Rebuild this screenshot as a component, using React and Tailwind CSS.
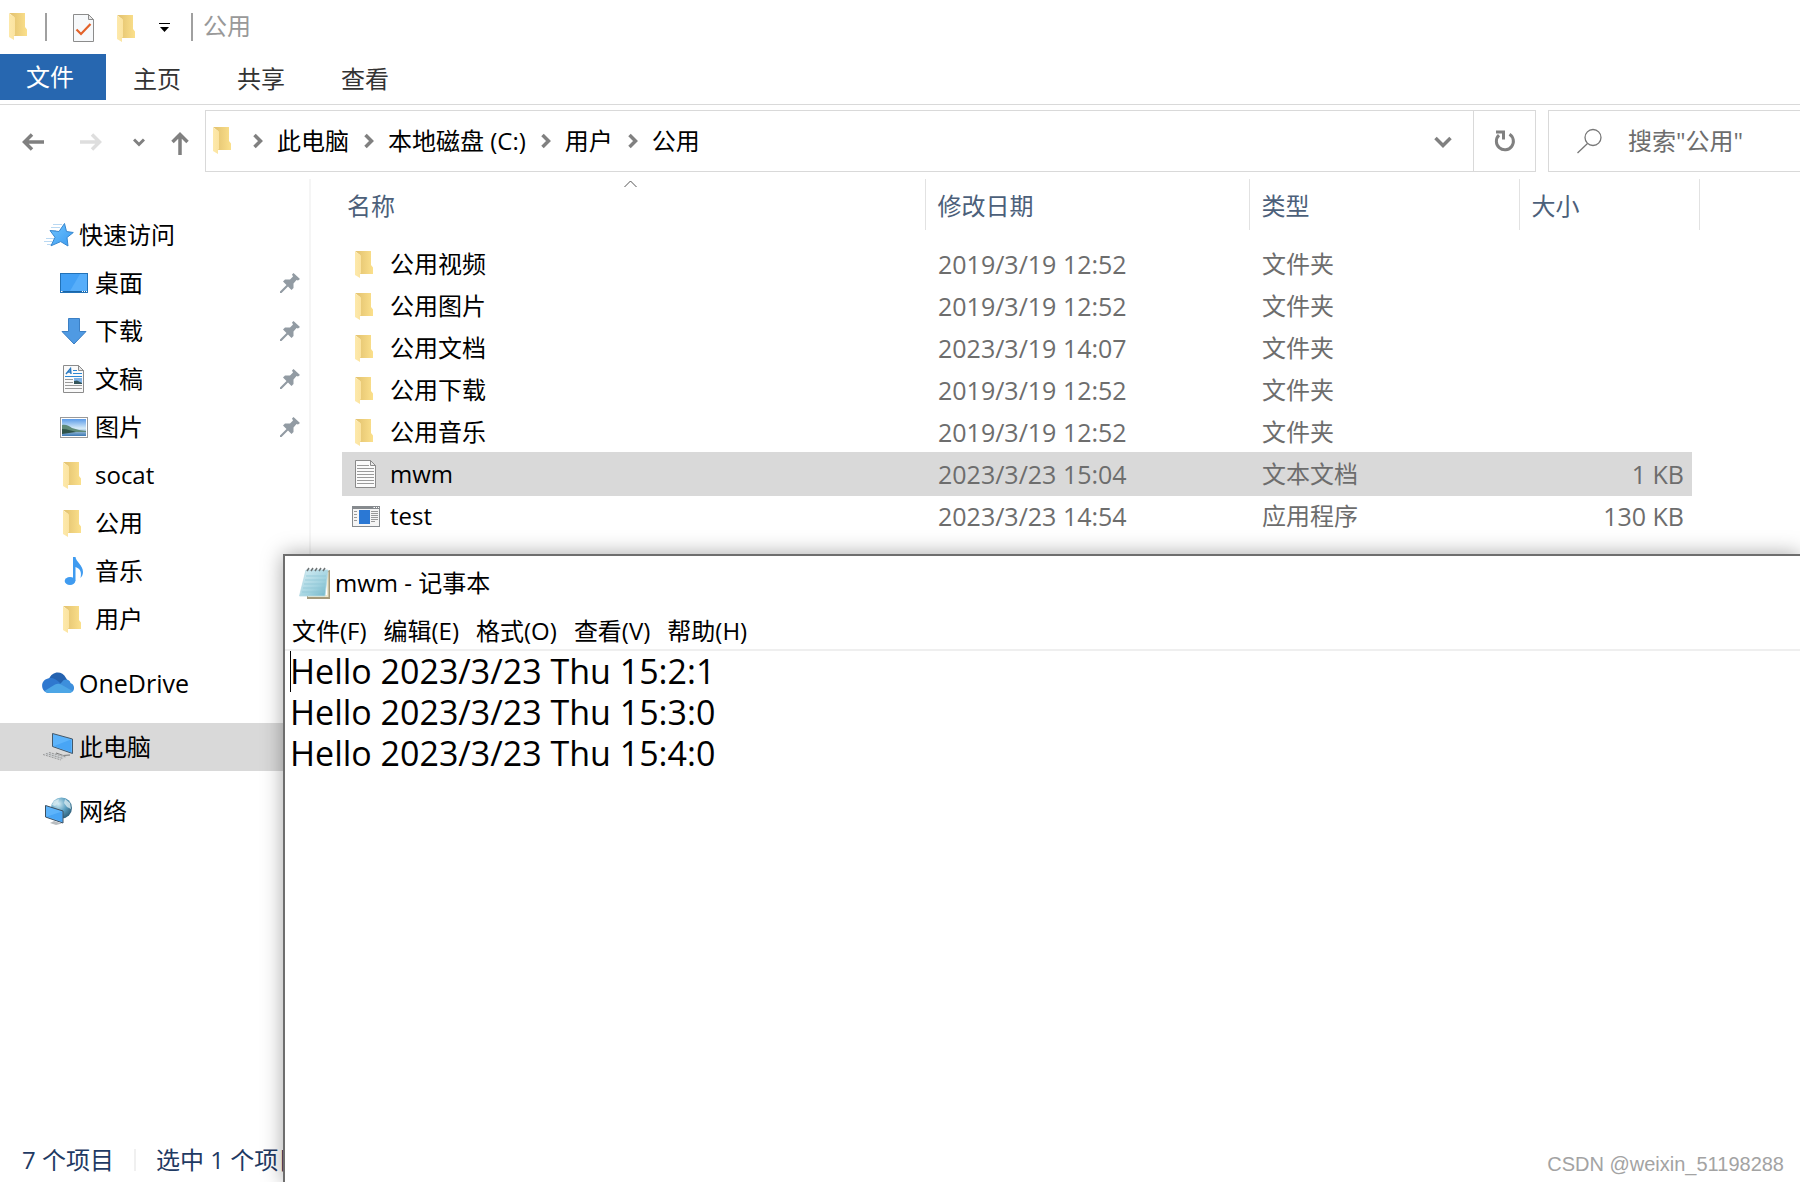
/**
 * File Explorer with a Notepad window on top
 */

import { useState } from 'react';

const files = [
  { name: '公用视频', date: '2019/3/19 12:52', type: '文件夹', size: '', icon: 'folder' },
  { name: '公用图片', date: '2019/3/19 12:52', type: '文件夹', size: '', icon: 'folder' },
  { name: '公用文档', date: '2023/3/19 14:07', type: '文件夹', size: '', icon: 'folder' },
  { name: '公用下载', date: '2019/3/19 12:52', type: '文件夹', size: '', icon: 'folder' },
  { name: '公用音乐', date: '2019/3/19 12:52', type: '文件夹', size: '', icon: 'folder' },
  { name: 'mwm', date: '2023/3/23 15:04', type: '文本文档', size: '1 KB', icon: 'text' },
  { name: 'test', date: '2023/3/23 14:54', type: '应用程序', size: '130 KB', icon: 'app' },
];

const quickAccess = [
  { name: '桌面', icon: 'desktop', pinned: true },
  { name: '下载', icon: 'download', pinned: true },
  { name: '文稿', icon: 'document', pinned: true },
  { name: '图片', icon: 'picture', pinned: true },
  { name: 'socat', icon: 'folder' },
  { name: '公用', icon: 'folder' },
  { name: '音乐', icon: 'music' },
  { name: '用户', icon: 'folder' },
];

const crumbs = ['此电脑', '本地磁盘 (C:)', '用户', '公用'];
const menus = ['文件(F)', '编辑(E)', '格式(O)', '查看(V)', '帮助(H)'];
const noteText = 'Hello 2023/3/23 Thu 15:2:1\nHello 2023/3/23 Thu 15:3:0\nHello 2023/3/23 Thu 15:4:0';

const FolderIcon = () => (
  <svg width="19" height="28" viewBox="0 0 19 28">
    <defs>
      <linearGradient id="folderBack" x1="0" x2="1">
        <stop offset="0.2" stopColor="#e6c673" />
        <stop offset="1" stopColor="#fbe08c" />
      </linearGradient>
      <linearGradient id="folderFront" x1="0" x2="1">
        <stop offset="0" stopColor="#fde9ab" />
        <stop offset="1" stopColor="#fbe3a0" />
      </linearGradient>
    </defs>
    <path d="M0 0H16V14L18 16.500V23H5V4Z" fill="url(#folderBack)" />
    <path d="M0 0.500L6 4.500V22L5 23V27L0 24Z" fill="url(#folderFront)" />
  </svg>
);

const CheckDocIcon = () => (
  <svg width="21" height="28" viewBox="0 0 21 28">
    <path d="M0.500 0.500H15.500L20.500 5.500V27.500H0.500Z" fill="#f7f9fb" stroke="#8c8c8c" />
    <path d="M15.500 0.500V5.500H20.500Z" fill="#e8e8e8" stroke="#8c8c8c" />
    <path d="M3.500 15.500L8 20L17.500 10" fill="none" stroke="#e2622a" strokeWidth="2.200" />
  </svg>
);

const StarIcon = () => (
  <svg width="32" height="26" viewBox="0 0 32 26">
    <defs>
      <linearGradient id="star" x1="0" y1="0" x2="1" y2="1">
        <stop offset="0" stopColor="#6fc4ff" />
        <stop offset="1" stopColor="#3a9af0" />
      </linearGradient>
    </defs>
    <path d="M11 2.500H20M9 5.500H18M8 8.500H14M4 16.500H12M2 19.500H10M5 22.500H9" stroke="#b9d8f2" strokeWidth="1" />
    <path d="M22.500 1.500L24.500 9.500L31.300 10.500L25 15.500L26 24L18.700 19.600L9 23.800L13 15.300L8 8.500L17 9.500Z" fill="url(#star)" stroke="#3787cf" strokeWidth="1" />
  </svg>
);

const DesktopIcon = () => (
  <svg width="28" height="20" viewBox="0 0 28 20">
    <rect x="0.500" y="0.500" width="27" height="19" fill="#42a0f5" stroke="#2272b8" />
    <path d="M10 18L20 1H27V18Z" fill="#57aefa" />
    <path d="M1 18.500H27" stroke="#1a65a6" />
    <path d="M1 18.500H2.500M22 18.500H23M24 18.500H25M26 18.500H27" stroke="#fff" />
  </svg>
);

const DownloadIcon = () => (
  <svg width="28" height="27" viewBox="0 0 28 27">
    <path d="M8.500 0.500H19.500V13.500H26L14 26L2 13.500H8.500Z" fill="#4f9ae3" stroke="#3b7fc4" />
  </svg>
);

const DocumentIcon = () => (
  <svg width="28" height="28" viewBox="0 0 28 28">
    <path d="M3.500 0.500H18.500L23.500 5.500V27.500H3.500Z" fill="#fafafa" stroke="#8c8c8c" />
    <path d="M18.500 0.500V5.500H23.500Z" fill="#e8e8e8" stroke="#8c8c8c" />
    <path d="M6 9L10.500 3.500L11 9M8 7H11" fill="none" stroke="#2878c0" strokeWidth="1.400" />
    <path d="M13 5.500H17M13 8.500H22M5 11.500H22" stroke="#2b87d3" />
    <path d="M5 14.500H13M5 17.500H13M5 20.500H22M5 23.500H22" stroke="#9a9a9a" />
    <rect x="14" y="13" width="8" height="6" fill="#7fb2e5" />
    <path d="M14 16L17 15.500L22 18V19H14Z" fill="#34555a" />
  </svg>
);

const PictureIcon = () => (
  <svg width="28" height="21" viewBox="0 0 28 21">
    <defs>
      <linearGradient id="sky" x1="0" y1="0" x2="0" y2="1">
        <stop offset="0" stopColor="#5b9be8" />
        <stop offset="0.550" stopColor="#d6ebf8" />
        <stop offset="0.750" stopColor="#8fb4d2" />
        <stop offset="1" stopColor="#3b78b4" />
      </linearGradient>
    </defs>
    <rect x="0.500" y="0.500" width="27" height="20" fill="#fff" stroke="#999" />
    <rect x="2" y="2" width="24" height="17" fill="url(#sky)" />
    <path d="M2 8C6 7 9 9 12 11L19 13L26 14V15H2Z" fill="#5f8a78" />
    <path d="M2 12C8 12 12 14 16 15L2 17Z" fill="#2e5348" />
  </svg>
);

const MusicIcon = () => (
  <svg width="28" height="28" viewBox="0 0 28 28">
    <ellipse cx="10" cy="24" rx="5.300" ry="4" fill="#3f9bf0" />
    <path d="M13 0H15.500C16 5 23 8 23 15C23 17.500 22 19.500 20.500 21C22 15 20 11.500 15.500 10V24H13Z" fill="#3f9bf0" />
  </svg>
);

const OneDriveIcon = () => (
  <svg width="32" height="22" viewBox="0 0 32 22">
    <path d="M7 7C10 -1 20 -2 24 6L27 11L16 14L7 8Z" fill="#2462b0" />
    <path d="M7 21C-2 20 -2 8 6 6.500C10 5 14 7 17 10L20 13L7 21Z" fill="#2f78cf" />
    <path d="M20 10C22 6 28 7 28.500 11C34 13 33 21 27 21L15 15Z" fill="#3d8fdc" />
    <path d="M2.500 19L13 12.500C16 11 18 12 20 13L30.500 19C29 21 28 21 26 21H7C5 21 3.500 20 2.500 19Z" fill="#4da6e6" />
  </svg>
);

const ComputerIcon = () => (
  <svg width="32" height="28" viewBox="0 0 32 28">
    <path d="M10.500 0.500L30.500 6V20.500L10.500 13.500Z" fill="#5db4fb" stroke="#43586a" />
    <path d="M12 13L29 6.500V19L12 13.200Z" fill="#48a5f5" />
    <path d="M14 20L21 22.500L28 22" fill="none" stroke="#777" strokeWidth="1.200" />
    <path d="M1 21L7 19L25 23.500L19 27Z" fill="#cfd2d4" />
    <path d="M1 21.500L19 27M4 20.500L21 25.500M7 19.500L24 24" stroke="#999" strokeWidth="1" strokeDasharray="2 1" />
  </svg>
);

const NetworkIcon = () => (
  <svg width="32" height="28" viewBox="0 0 32 28">
    <defs>
      <radialGradient id="globe" cx="0.350" cy="0.300" r="0.800">
        <stop offset="0" stopColor="#d4ecf4" />
        <stop offset="0.500" stopColor="#5b9fc0" />
        <stop offset="1" stopColor="#28566f" />
      </radialGradient>
    </defs>
    <circle cx="19.500" cy="11" r="10.500" fill="url(#globe)" />
    <path d="M12 4L17 2L16 6L13 9L10 8ZM23 2L28 6L29 12L25 10L22 6Z" fill="#d7eaf0" opacity="0.800" />
    <path d="M3.500 8.500L21 14V26L3.500 20Z" fill="#5db4fb" stroke="#3c4f60" />
    <path d="M5 19.500L20 14.500V24.500Z" fill="#48a5f5" />
    <path d="M8 26L12 24L20 26.500L14 28Z" fill="#b9bdc0" />
  </svg>
);

const TextFileIcon = () => (
  <svg width="28" height="28" viewBox="0 0 28 28">
    <path d="M3.500 0.500H18.500L23.500 5.500V27.500H3.500Z" fill="#fafafa" stroke="#8a8a8a" />
    <path d="M18.500 0.500V5.500H23.500Z" fill="#e8e8e8" stroke="#8a8a8a" />
    <path d="M5 5.500H17M5 8.500H22M5 11.500H22M5 14.500H22M5 17.500H22M5 20.500H22M5 23.500H22" stroke="#9a9a9a" />
  </svg>
);

const AppIcon = () => (
  <svg width="28" height="21" viewBox="0 0 28 21">
    <rect x="0.500" y="0.500" width="27" height="20" fill="#f5f5f5" stroke="#868a8e" />
    <rect x="0" y="0" width="28" height="3" fill="#868a8e" />
    <path d="M21.500 1.500H23M24 1.500H25M26 1.500H27" stroke="#fff" />
    <rect x="7" y="4" width="11" height="14" fill="#2b78d4" />
    <path d="M2 5.500H5M2 8.500H5M2 11.500H5M2 14.500H5" stroke="#999" />
    <path d="M19 5.500H26M19 7.500H26M19 9.500H26M19 11.500H26M19 13.500H26M19 15.500H23" stroke="#999" />
  </svg>
);

const NotepadIcon = () => (
  <svg width="32" height="33" viewBox="0 0 32 33">
    <defs>
      <linearGradient id="pad" x1="0" y1="0" x2="1" y2="1">
        <stop offset="0" stopColor="#d9eff5" />
        <stop offset="0.600" stopColor="#a2d3e0" />
        <stop offset="1" stopColor="#6fb4c8" />
      </linearGradient>
    </defs>
    <path d="M8 29H28V4L31 3V32H8Z" fill="#a59a7c" />
    <path d="M9 28H28V6L29.500 5V30H9Z" fill="#efe8cc" />
    <path d="M7 3H29L26 29H0.500Z" fill="url(#pad)" stroke="#b5d9e3" strokeWidth="0.800" />
    <path d="M7 9H27M6 13H27M5 17H26M4 21H26M3 25H25" stroke="#8cc4d4" strokeWidth="0.700" />
    <path d="M8 4L10 1M12 4L14 1M16 4L18 1M20 4L22 1M24 4L26 1" stroke="#6c7274" strokeWidth="1.500" />
  </svg>
);

const PinIcon = () => (
  <svg width="20" height="20" viewBox="0 0 20 20">
    <path d="M13.500 0L20 6L18 7.500L16.500 7L13.500 10.500V15L11.500 17L8 13.500L1.500 20H0V18.500L6.500 12L3 8.500L5 6.500H10L13 3.500L12 1.500Z" fill="#929ba3" />
  </svg>
);

const CrumbChevron = () => (
  <svg width="10" height="16" viewBox="0 0 10 16">
    <path d="M1.500 2L7.500 8L1.500 14" fill="none" stroke="#808080" strokeWidth="3.500" />
  </svg>
);

const icons = {
  folder: <FolderIcon />,
  desktop: <DesktopIcon />,
  download: <DownloadIcon />,
  document: <DocumentIcon />,
  picture: <PictureIcon />,
  music: <MusicIcon />,
  text: <TextFileIcon />,
  app: <AppIcon />,
};

const ItemIcon = ({ name }) => (
  <span className={name === 'folder' ? 'w-7 pl-[3px] pt-0.5' : 'w-7'}>{icons[name]}</span>
);

const TitleBar = () => (
  <header className="flex items-center h-[54px] pl-[9px] pb-px">
    <FolderIcon />
    <span className="w-[2px] h-7 ml-[17px] bg-[#a0a0a0]" />
    <button type="button" aria-label="属性" className="ml-[26px] pt-0.5"><CheckDocIcon /></button>
    <button type="button" aria-label="新建文件夹" className="ml-[23px] pt-1"><FolderIcon /></button>
    <button type="button" aria-label="自定义快速访问工具栏" className="ml-[23px] pt-0.5">
      <svg width="11" height="9" viewBox="0 0 11 9">
        <path d="M0 0.500H11" stroke="#000" />
        <path d="M1 4H10L5.500 9Z" fill="#000" />
      </svg>
    </button>
    <span className="w-[2px] h-7 ml-[21px] bg-[#a0a0a0]" />
    <h1 className="ml-[10px] pb-0.5 text-[#999]">公用</h1>
  </header>
);

const AddressRow = () => (
  <div className="flex items-center pt-[5px]">
    <div className="flex items-center w-[205px] shrink-0 pl-[22px] pt-0.5">
      <button type="button" aria-label="后退">
        <svg width="22" height="18" viewBox="0 0 22 18">
          <path d="M10 1.500L2.500 9L10 16.500M2.500 9H22" fill="none" stroke="#808080" strokeWidth="3.500" />
        </svg>
      </button>
      <button type="button" aria-label="前进" className="ml-9">
        <svg width="22" height="18" viewBox="0 0 22 18">
          <path d="M12 1.500L19.500 9L12 16.500M19.500 9H0" fill="none" stroke="#dedede" strokeWidth="3.500" />
        </svg>
      </button>
      <button type="button" aria-label="最近" className="ml-[31px]">
        <svg width="12" height="9" viewBox="0 0 12 9">
          <path d="M1 1.500L6 6.500L11 1.500" fill="none" stroke="#808080" strokeWidth="3" />
        </svg>
      </button>
      <button type="button" aria-label="上移" className="ml-[26px] pt-0.5">
        <svg width="18" height="23" viewBox="0 0 18 23">
          <path d="M1.500 10L9 2.500L16.500 10M9 2.500V23" fill="none" stroke="#808080" strokeWidth="3.500" />
        </svg>
      </button>
    </div>
    <nav className="flex flex-1 items-center h-[62px] border border-[#d9d9d9] pl-[7px]">
      <FolderIcon />
      {crumbs.map((c, i) => (
        <div key={c} className={i === 0 ? 'flex items-center pl-[21px]' : 'flex items-center pl-[15px]'}>
          <CrumbChevron />
          <button type="button" className="pl-[14px]">{c}</button>
        </div>
      ))}
      <button type="button" aria-label="以前的位置" className="ml-auto mr-[21px] pt-0.5">
        <svg width="18" height="13" viewBox="0 0 18 13">
          <path d="M1.500 2L9 9.500L16.500 2" fill="none" stroke="#808080" strokeWidth="3.500" />
        </svg>
      </button>
      <button type="button" aria-label="刷新" className="flex items-center justify-center w-[62px] h-full border-l border-[#d9d9d9]">
        <svg width="22" height="22" viewBox="0 0 22 22">
          <path d="M15.500 4.200A8.500 8.500 0 1 1 5 5.200" fill="none" stroke="#808080" strokeWidth="3" />
          <path d="M2 0.500H11V9.500H8V3.500H2Z" fill="#808080" />
        </svg>
      </button>
    </nav>
    <label className="flex items-center w-[252px] h-[62px] ml-3 border border-r-0 border-[#d9d9d9] pl-7">
      <svg width="26" height="26" viewBox="0 0 26 26" className="shrink-0">
        <circle cx="16" cy="9.500" r="8" fill="none" stroke="#777" strokeWidth="1.300" />
        <path d="M10.500 15.500L0.500 25" stroke="#777" strokeWidth="1.300" />
      </svg>
      <input type="text" aria-label="搜索" placeholder={'搜索"公用"'} className="w-full min-w-0 ml-[25px] outline-none placeholder:text-[#6d6d6d]" />
    </label>
  </div>
);

const Sidebar = () => (
  <aside className="w-[311px] shrink-0 border-r-2 border-[#f5f5f5] pt-8">
    <ul>
      <li>
        <a href="#quick" className="flex items-center h-12 pl-[42px] gap-[5px]"><StarIcon />快速访问</a>
      </li>
      {quickAccess.map((q) => (
        <li key={q.name}>
          <a href="#folder" className="flex items-center h-12 pl-[60px] pr-[9px] gap-[7px]">
            <ItemIcon name={q.icon} />
            <span className="flex-1">{q.name}</span>
            {q.pinned && <PinIcon />}
          </a>
        </li>
      ))}
      <li className="mt-4">
        <a href="#onedrive" className="flex items-center h-12 pl-[42px] gap-[5px] text-[25px]"><OneDriveIcon />OneDrive</a>
      </li>
      <li className="mt-4 bg-[#d9d9d9]">
        <a href="#pc" className="flex items-center h-12 pl-[42px] gap-[5px]"><ComputerIcon />此电脑</a>
      </li>
      <li className="mt-4">
        <a href="#network" className="flex items-center h-12 pl-[42px] gap-[5px]"><NetworkIcon />网络</a>
      </li>
    </ul>
  </aside>
);

const FileTable = () => {
  const [selected, setSelected] = useState('mwm');

  return (
    <main className="flex-1 min-w-0 pl-[31px]">
      <table className="w-full table-fixed border-collapse text-left">
        <colgroup>
          <col className="w-[583px]" />
          <col className="w-[324px]" />
          <col className="w-[270px]" />
          <col className="w-[173px]" />
          <col className="w-[7px]" />
          <col />
        </colgroup>
        <thead className="text-[#4c607a]">
          <tr className="h-[51px]">
            <th className="relative pl-[5px] pt-0.5 font-normal">
              <svg width="13" height="8" viewBox="0 0 13 8" className="absolute top-px left-[282px]">
                <path d="M0.500 7L6.500 1L12.500 7" fill="none" stroke="#555" />
              </svg>
              名称
            </th>
            <th className="pl-3 pt-0.5 font-normal border-l border-[#e2e2e2]">修改日期</th>
            <th className="pl-3 pt-0.5 font-normal border-l border-[#e2e2e2]">类型</th>
            <th colSpan="2" className="pl-3 pt-0.5 font-normal border-x border-[#e2e2e2]">大小</th>
            <td />
          </tr>
        </thead>
        <tbody className="text-[#6d6d6d] before:block before:h-[13px]">
          {files.map((f) => {
            const bg = f.name === selected ? 'bg-[#d9d9d9] shadow-[0_1px_0_#d9d9d9,0_-1px_0_#d9d9d9]' : '';
            return (
              <tr key={f.name} className="h-[42px]" onClick={() => setSelected(f.name)}>
                <td className={`pl-[10px] text-black ${bg}`}>
                  <div className="flex items-center gap-[10px]">
                    <ItemIcon name={f.icon} />
                    {f.name}
                  </div>
                </td>
                <td className={`pl-[13px] text-[25px] ${bg}`}>{f.date}</td>
                <td className={`pl-[13px] ${bg}`}>{f.type}</td>
                <td className={`pr-2 text-right text-[25px] ${bg}`}>{f.size}</td>
                <td />
                <td />
              </tr>
            );
          })}
        </tbody>
      </table>
    </main>
  );
};

const Notepad = () => (
  <section className="absolute left-[283px] top-[554px] right-0 bottom-0 flex flex-col bg-white border-l-2 border-t-2 border-[#6e6e6e] shadow-[0_0_20px_rgba(0,0,0,0.35)]">
    <div className="flex items-center h-[54px] pl-[14px] gap-1">
      <NotepadIcon />
      <h2>mwm - 记事本</h2>
    </div>
    <div className="flex items-center h-[41px] pl-[7px] pt-0.5 gap-[17px] border-b-2 border-[#efefef]">
      {menus.map((m) => (
        <button key={m} type="button">{m}</button>
      ))}
    </div>
    <div className="relative flex flex-1">
      <span className="absolute left-[5px] top-0 w-px h-[41px] bg-black" />
      <textarea aria-label="文本" defaultValue={noteText} className="flex-1 pl-[5px] resize-none outline-none text-[34px] leading-[41px]" />
    </div>
    <p className="absolute right-4 bottom-1 text-[20px] leading-7 text-[#a3a3a3] font-['Liberation_Sans',sans-serif]">CSDN @weixin_51198288</p>
  </section>
);

const App = () => (
  <div className="relative flex flex-col min-h-screen overflow-hidden bg-white text-black text-[24px] leading-8 font-['Open_Sans','Noto_Sans_CJK_SC',sans-serif]">
    <TitleBar />
    <div className="flex h-[51px] border-b border-[#d9d9d9] text-[#333]">
      <button type="button" className="w-[106px] h-[46px] pr-[6px] bg-[#2767b0] text-white">文件</button>
      <button type="button" className="w-[104px] pr-0.5">主页</button>
      <button type="button" className="w-[104px] pr-0.5">共享</button>
      <button type="button" className="w-[104px] pr-0.5">查看</button>
    </div>
    <AddressRow />
    <div className="flex flex-1 pt-[7px]">
      <Sidebar />
      <FileTable />
    </div>
    <footer className="flex items-center h-[44px] pl-[22px] text-[#1f3a63]">
      <span>7 个项目</span>
      <span className="w-[2px] h-[22px] mx-[20px] bg-[#f0f0f0]" />
      <span>选中 1 个项目</span>
    </footer>
    <Notepad />
  </div>
);

export default App;
